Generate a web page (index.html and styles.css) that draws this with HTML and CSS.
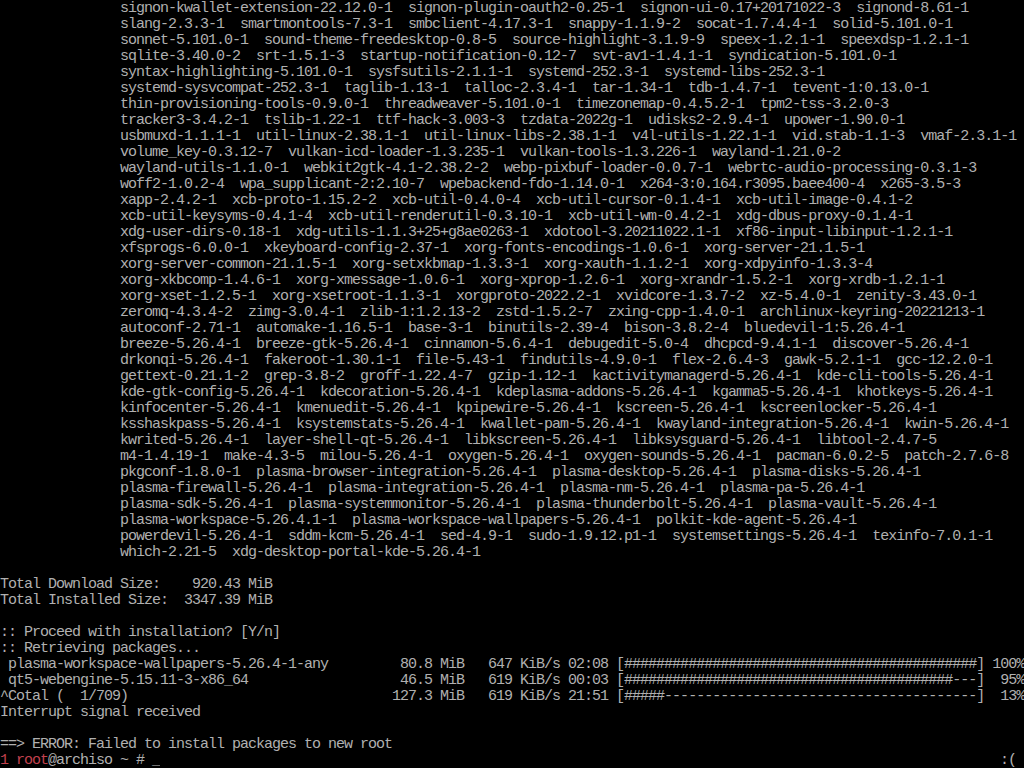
FILE: index.html
```html
<!DOCTYPE html>
<html lang="en">
<head>
  <meta charset="UTF-8">
  <title>tty1</title>
  <link rel="stylesheet" href="styles.css">
</head>
<body>

  <div class="term">
<pre class="pkgs">
signon-kwallet-extension-22.12.0-1  signon-plugin-oauth2-0.25-1  signon-ui-0.17+20171022-3  signond-8.61-1
slang-2.3.3-1  smartmontools-7.3-1  smbclient-4.17.3-1  snappy-1.1.9-2  socat-1.7.4.4-1  solid-5.101.0-1
sonnet-5.101.0-1  sound-theme-freedesktop-0.8-5  source-highlight-3.1.9-9  speex-1.2.1-1  speexdsp-1.2.1-1
sqlite-3.40.0-2  srt-1.5.1-3  startup-notification-0.12-7  svt-av1-1.4.1-1  syndication-5.101.0-1
syntax-highlighting-5.101.0-1  sysfsutils-2.1.1-1  systemd-252.3-1  systemd-libs-252.3-1
systemd-sysvcompat-252.3-1  taglib-1.13-1  talloc-2.3.4-1  tar-1.34-1  tdb-1.4.7-1  tevent-1:0.13.0-1
thin-provisioning-tools-0.9.0-1  threadweaver-5.101.0-1  timezonemap-0.4.5.2-1  tpm2-tss-3.2.0-3
tracker3-3.4.2-1  tslib-1.22-1  ttf-hack-3.003-3  tzdata-2022g-1  udisks2-2.9.4-1  upower-1.90.0-1
usbmuxd-1.1.1-1  util-linux-2.38.1-1  util-linux-libs-2.38.1-1  v4l-utils-1.22.1-1  vid.stab-1.1-3  vmaf-2.3.1-1
volume_key-0.3.12-7  vulkan-icd-loader-1.3.235-1  vulkan-tools-1.3.226-1  wayland-1.21.0-2
wayland-utils-1.1.0-1  webkit2gtk-4.1-2.38.2-2  webp-pixbuf-loader-0.0.7-1  webrtc-audio-processing-0.3.1-3
woff2-1.0.2-4  wpa_supplicant-2:2.10-7  wpebackend-fdo-1.14.0-1  x264-3:0.164.r3095.baee400-4  x265-3.5-3
xapp-2.4.2-1  xcb-proto-1.15.2-2  xcb-util-0.4.0-4  xcb-util-cursor-0.1.4-1  xcb-util-image-0.4.1-2
xcb-util-keysyms-0.4.1-4  xcb-util-renderutil-0.3.10-1  xcb-util-wm-0.4.2-1  xdg-dbus-proxy-0.1.4-1
xdg-user-dirs-0.18-1  xdg-utils-1.1.3+25+g8ae0263-1  xdotool-3.20211022.1-1  xf86-input-libinput-1.2.1-1
xfsprogs-6.0.0-1  xkeyboard-config-2.37-1  xorg-fonts-encodings-1.0.6-1  xorg-server-21.1.5-1
xorg-server-common-21.1.5-1  xorg-setxkbmap-1.3.3-1  xorg-xauth-1.1.2-1  xorg-xdpyinfo-1.3.3-4
xorg-xkbcomp-1.4.6-1  xorg-xmessage-1.0.6-1  xorg-xprop-1.2.6-1  xorg-xrandr-1.5.2-1  xorg-xrdb-1.2.1-1
xorg-xset-1.2.5-1  xorg-xsetroot-1.1.3-1  xorgproto-2022.2-1  xvidcore-1.3.7-2  xz-5.4.0-1  zenity-3.43.0-1
zeromq-4.3.4-2  zimg-3.0.4-1  zlib-1:1.2.13-2  zstd-1.5.2-7  zxing-cpp-1.4.0-1  archlinux-keyring-20221213-1
autoconf-2.71-1  automake-1.16.5-1  base-3-1  binutils-2.39-4  bison-3.8.2-4  bluedevil-1:5.26.4-1
breeze-5.26.4-1  breeze-gtk-5.26.4-1  cinnamon-5.6.4-1  debugedit-5.0-4  dhcpcd-9.4.1-1  discover-5.26.4-1
drkonqi-5.26.4-1  fakeroot-1.30.1-1  file-5.43-1  findutils-4.9.0-1  flex-2.6.4-3  gawk-5.2.1-1  gcc-12.2.0-1
gettext-0.21.1-2  grep-3.8-2  groff-1.22.4-7  gzip-1.12-1  kactivitymanagerd-5.26.4-1  kde-cli-tools-5.26.4-1
kde-gtk-config-5.26.4-1  kdecoration-5.26.4-1  kdeplasma-addons-5.26.4-1  kgamma5-5.26.4-1  khotkeys-5.26.4-1
kinfocenter-5.26.4-1  kmenuedit-5.26.4-1  kpipewire-5.26.4-1  kscreen-5.26.4-1  kscreenlocker-5.26.4-1
ksshaskpass-5.26.4-1  ksystemstats-5.26.4-1  kwallet-pam-5.26.4-1  kwayland-integration-5.26.4-1  kwin-5.26.4-1
kwrited-5.26.4-1  layer-shell-qt-5.26.4-1  libkscreen-5.26.4-1  libksysguard-5.26.4-1  libtool-2.4.7-5
m4-1.4.19-1  make-4.3-5  milou-5.26.4-1  oxygen-5.26.4-1  oxygen-sounds-5.26.4-1  pacman-6.0.2-5  patch-2.7.6-8
pkgconf-1.8.0-1  plasma-browser-integration-5.26.4-1  plasma-desktop-5.26.4-1  plasma-disks-5.26.4-1
plasma-firewall-5.26.4-1  plasma-integration-5.26.4-1  plasma-nm-5.26.4-1  plasma-pa-5.26.4-1
plasma-sdk-5.26.4-1  plasma-systemmonitor-5.26.4-1  plasma-thunderbolt-5.26.4-1  plasma-vault-5.26.4-1
plasma-workspace-5.26.4.1-1  plasma-workspace-wallpapers-5.26.4-1  polkit-kde-agent-5.26.4-1
powerdevil-5.26.4-1  sddm-kcm-5.26.4-1  sed-4.9-1  sudo-1.9.12.p1-1  systemsettings-5.26.4-1  texinfo-7.0.1-1
which-2.21-5  xdg-desktop-portal-kde-5.26.4-1
</pre>
<pre class="out">

Total Download Size:    920.43 MiB
Total Installed Size:  3347.39 MiB

:: Proceed with installation? [Y/n]
:: Retrieving packages...
 plasma-workspace-wallpapers-5.26.4-1-any         80.8 MiB   647 KiB/s 02:08 [############################################] 100%
 qt5-webengine-5.15.11-3-x86_64                   46.5 MiB   619 KiB/s 00:03 [#########################################---]  95%
^Cotal (  1/709)                                 127.3 MiB   619 KiB/s 21:51 [#####---------------------------------------]  13%
Interrupt signal received

==&gt; ERROR: Failed to install packages to new root
</pre>
    <div class="prompt">
      <pre class="ps1"><span class="red">1 root</span>@archiso ~ # <span class="cursor">_</span></pre>
      <pre class="rps1">:(</pre>
    </div>
  </div>

</body>
</html>
```

FILE: styles.css
```css
html, body {
  margin: 0;
  background: #000;
}
body {
  width: 1024px;
  height: 768px;
  overflow: hidden;
}
.term {
  padding-top: 1px;
  color: #b0b0b0;
  font-family: 'Liberation Mono', 'DejaVu Sans Mono', monospace;
  font-size: 15px;
  letter-spacing: -1px;
  line-height: 16px;
}
.term pre {
  margin: 0;
  font: inherit;
  white-space: pre;
  overflow: hidden;
}
.pkgs {
  padding-left: 120px;
}
.prompt {
  display: flex;
  justify-content: space-between;
  padding-right: 8px;
  height: 16px;
}
.red {
  color: #c2414e;
}
.cursor {
  color: #bbbbbb;
}
```
